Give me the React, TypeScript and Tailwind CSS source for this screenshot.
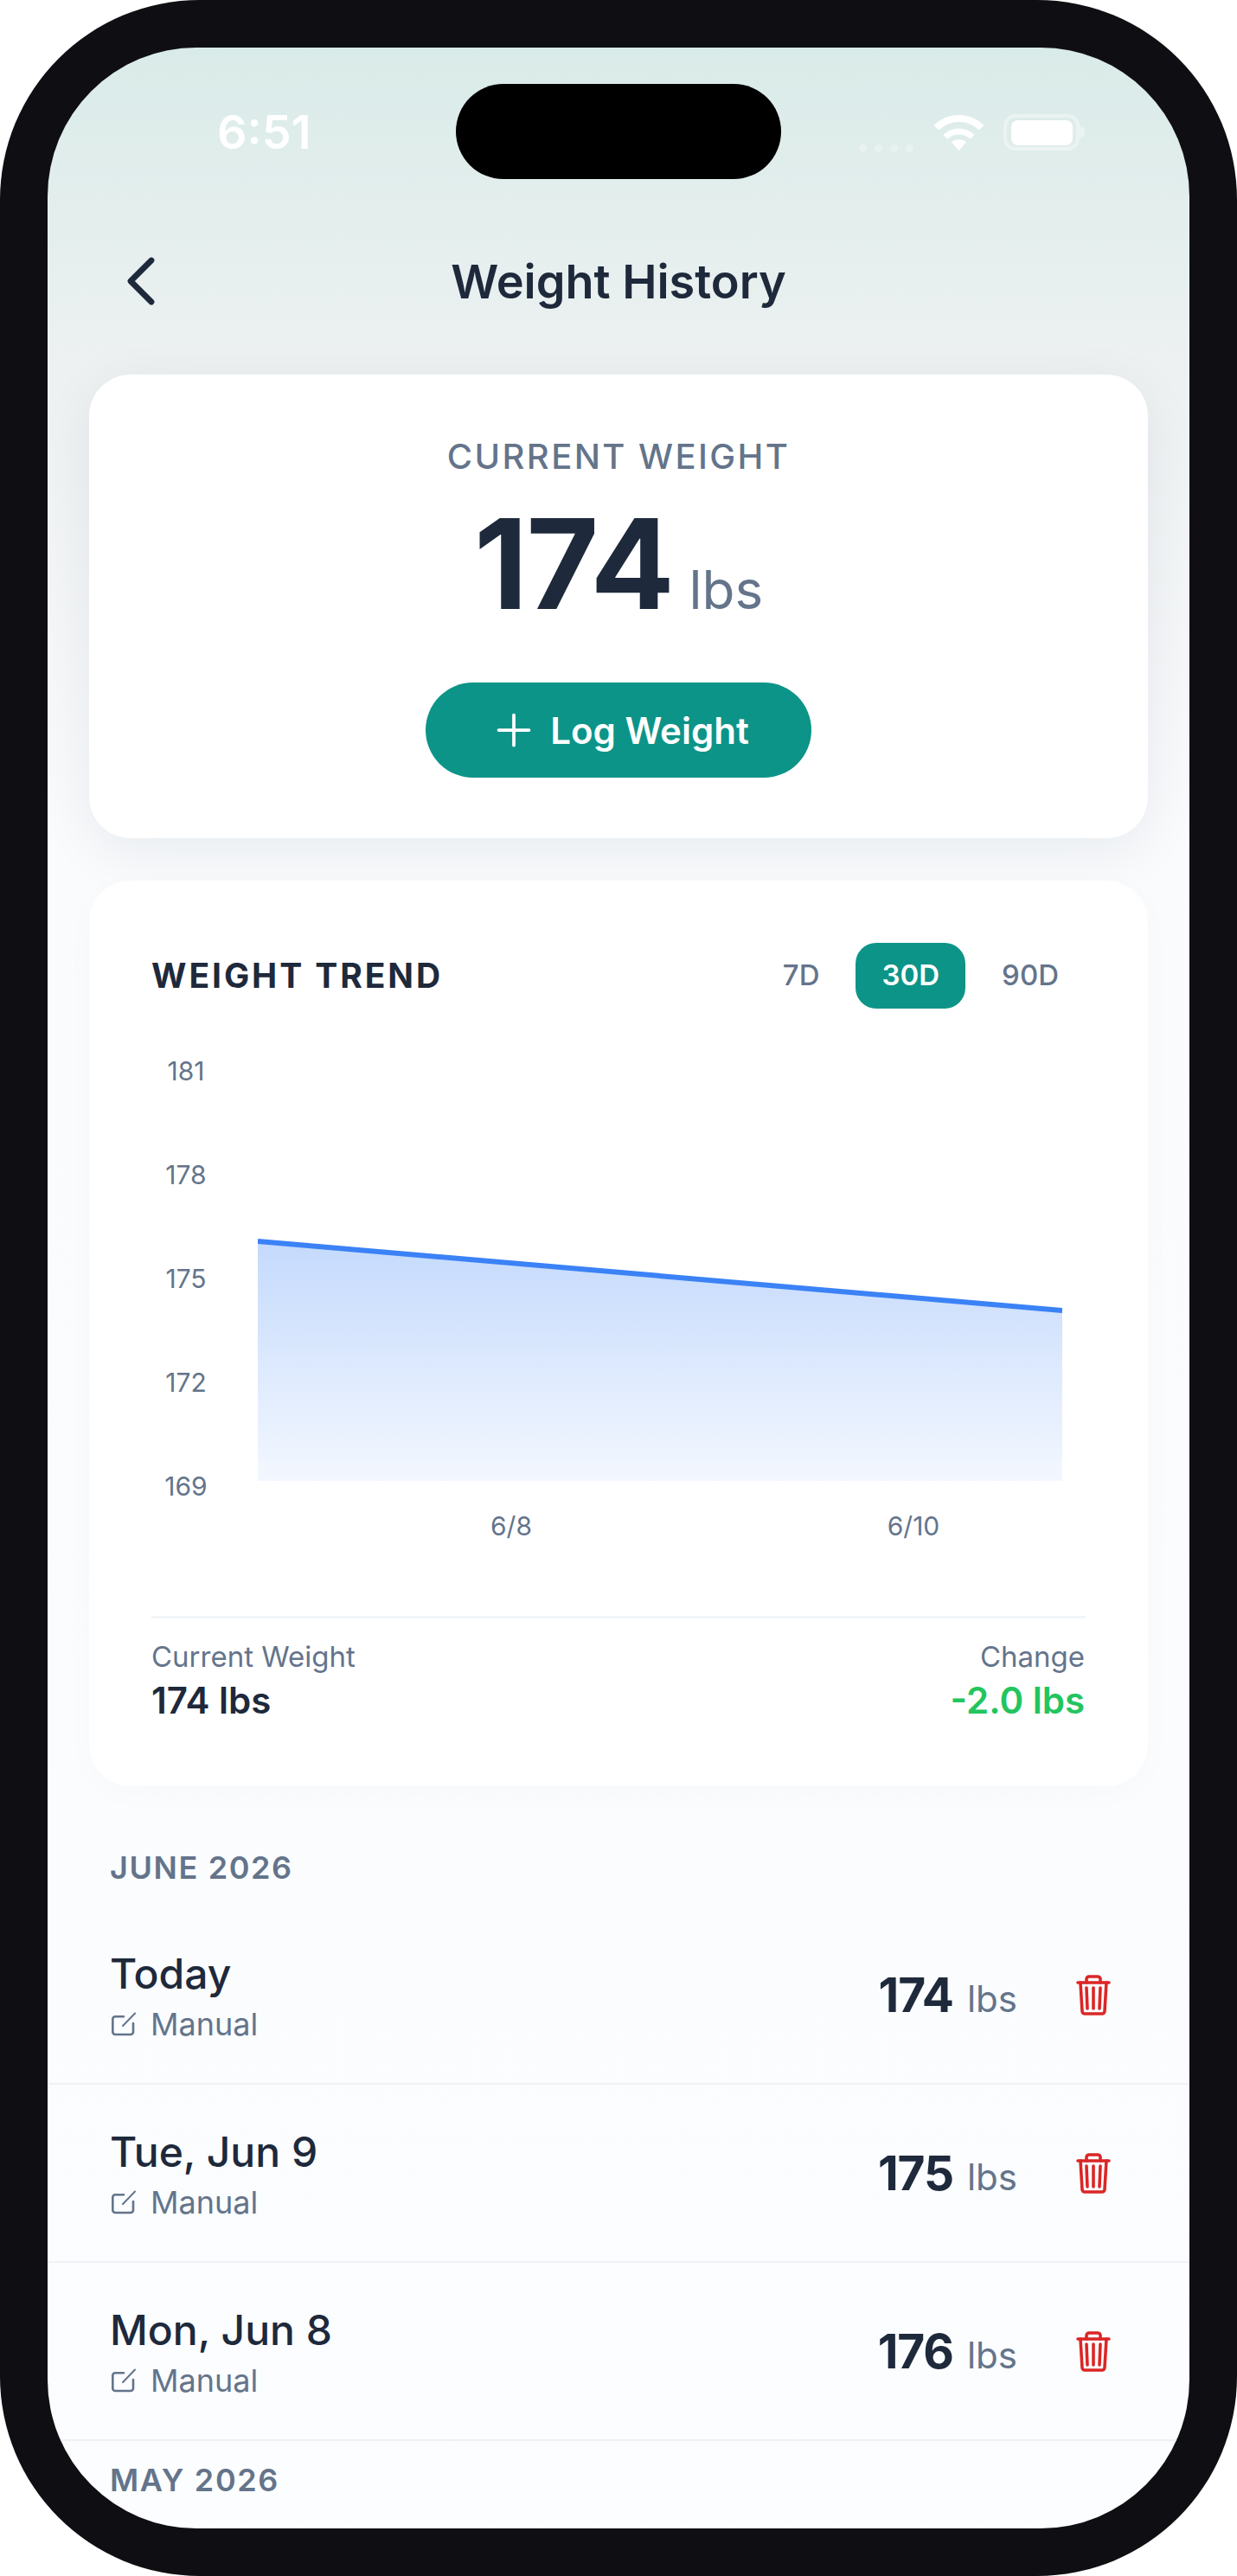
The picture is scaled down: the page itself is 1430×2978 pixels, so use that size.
import { ChevronLeft, Plus } from 'lucide-react'

const ROWS = [
  { date: 'Today', weight: 174 },
  { date: 'Tue, Jun 9', weight: 175 },
  { date: 'Mon, Jun 8', weight: 176 },
]

function StatusBar() {
  return (
    <div className="flex h-[196px] items-center justify-between pl-[196px] pr-[121px]">
      <span className="text-[54px] font-semibold leading-none text-white">6:51</span>
      <div className="flex items-center">
        <div className="mt-[36px] flex gap-[9px] opacity-30">
          <span className="h-[9px] w-[9px] rounded-full bg-white" />
          <span className="h-[9px] w-[9px] rounded-full bg-white" />
          <span className="h-[9px] w-[9px] rounded-full bg-white" />
          <span className="h-[9px] w-[9px] rounded-full bg-white" />
        </div>
        <svg className="ml-[24px]" width="57" height="41" viewBox="0 0 57 41" fill="none">
          <path d="M2.3 14.8A37 37 0 0 1 54.7 14.8" stroke="#fff" strokeWidth="8" />
          <path d="M12.9 25.4A22 22 0 0 1 44.1 25.4" stroke="#fff" strokeWidth="7" />
          <path d="M28.5 41L20 31.5A13 13 0 0 1 37 31.5Z" fill="#fff" />
        </svg>
        <div className="ml-[23px] flex h-[42px] w-[88px] items-center justify-center rounded-[14px] border-[4px] border-white/40">
          <span className="h-[29px] w-[71px] rounded-[8px] bg-white" />
        </div>
        <span className="h-[14px] w-[6px] rounded-r-full bg-white/40" />
      </div>
    </div>
  )
}

function TrendTab({ label, active }: { label: string; active?: boolean }) {
  return (
    <span
      className={`flex h-[76px] items-center rounded-[24px] text-[33px] ${
        active ? 'bg-[#0d9488] px-[30px] font-semibold text-white' : 'px-[31px] font-medium text-[#64748b]'
      }`}
    >
      {label}
    </span>
  )
}

function TrendChart() {
  return (
    <>
      <div className="mt-[54px] flex h-[516px]">
        <div className="flex w-[80px] flex-col justify-between text-center text-[30px] leading-[36px] text-[#64748b]">
          <span>181</span>
          <span>178</span>
          <span>175</span>
          <span>172</span>
          <span>169</span>
        </div>
        <svg className="ml-[43px]" width="930" height="516" viewBox="0 0 930 516">
          <defs>
            <linearGradient id="trendFill" x1="0" y1="0" x2="0" y2="1">
              <stop offset="0" stopColor="#3b82f6" stopOpacity="0.3" />
              <stop offset="1" stopColor="#3b82f6" stopOpacity="0.06" />
            </linearGradient>
          </defs>
          <path d="M0 215L930 295V492H0Z" fill="url(#trendFill)" />
          <path d="M0 215L930 295" stroke="#3b82f6" strokeWidth="6" fill="none" />
        </svg>
      </div>
      <div className="ml-[366px] mt-[10px] flex gap-[365px] text-[30px] leading-[36px] text-[#64748b]">
        <span className="w-[100px] text-center">6/8</span>
        <span className="w-[100px] text-center">6/10</span>
      </div>
    </>
  )
}

function EditIcon() {
  return (
    <svg className="ml-[2px]" width="28" height="28" viewBox="0 0 28 28" fill="none" stroke="#64748b" strokeWidth="2.6" strokeLinecap="round" strokeLinejoin="round">
      <path d="M14 5.300H4a2.700 2.700 0 0 0-2.700 2.700v15a3 3 0 0 0 3 3H22a3 3 0 0 0 3-3V13" />
      <path d="M13 16L27 1.500" strokeWidth="2" />
    </svg>
  )
}

function TrashIcon() {
  return (
    <svg width="40" height="47" viewBox="0 0 40 47" fill="none" stroke="#dc2626" strokeWidth="3.600" strokeLinecap="round" strokeLinejoin="round">
      <path d="M2 9H38" />
      <path d="M5 9L7 42a3 3 0 0 0 3 3H30a3 3 0 0 0 3-3L35 9" />
      <path d="M12 9V5a3 3 0 0 1 3-3H25a3 3 0 0 1 3 3V9" />
      <path d="M12 15L13 39" />
      <path d="M20 15V39" />
      <path d="M28 15L27 39" />
    </svg>
  )
}

function LogRow({ date, weight }: { date: string; weight: number }) {
  return (
    <div className="flex h-[206px] items-center justify-between border-b-2 border-[#eef1f5] pl-[72px] pr-[91px]">
      <div className="flex flex-col pt-[4px]">
        <span className="text-[48px] font-medium leading-[60px] text-[#1e293b]">{date}</span>
        <div className="mt-[4px] flex items-center gap-[17px] text-[36px] leading-[48px] text-[#64748b]">
          <EditIcon />
          <span>Manual</span>
        </div>
      </div>
      <div className="flex items-center gap-[68px]">
        <div className="flex items-baseline gap-[16px]">
          <span className="text-[55px] font-bold leading-none tracking-[-0.02em] text-[#1e293b]">{weight}</span>
          <span className="text-[42px] leading-none text-[#64748b]">lbs</span>
        </div>
        <TrashIcon />
      </div>
    </div>
  )
}

export default function App() {
  return (
    <div className="h-[2978px] w-[1430px] bg-white font-['Inter',sans-serif]">
      <div className="h-full w-full rounded-[231px] bg-[#0f0f13] p-[55px]">
        <div className="relative h-full w-full overflow-hidden rounded-[172px] bg-[linear-gradient(180deg,#d9ebe8_0px,#eef1f2_380px,#f9fbfd_900px,#fbfdff_100%)]">
          <div className="absolute left-[472px] top-[42px] h-[110px] w-[376px] rounded-[55px] bg-black" />
          <StatusBar />

          <div className="grid h-[148px] grid-cols-[1fr_auto_1fr] items-center px-[60px]">
            <ChevronLeft size={96} strokeWidth={1.7} color="#1e293b" />
            <h1 className="text-[54px] font-semibold text-[#1e293b]">Weight History</h1>
          </div>

          <div className="mx-[48px] mt-[34px] flex h-[536px] flex-col items-center rounded-[48px] bg-white shadow-[0_16px_64px_rgba(15,23,42,0.07)]">
            <span className="mt-[72px] text-[40px] font-medium leading-[46px] tracking-[0.06em] text-[#64748b]">CURRENT WEIGHT</span>
            <div className="mt-[31px] flex items-baseline gap-[18px]">
              <span className="text-[144px] font-bold leading-[140px] tracking-[-0.01em] text-[#1e293b]">174</span>
              <span className="text-[62px] leading-none text-[#64748b]">lbs</span>
            </div>
            <button className="mt-[67px] flex h-[110px] w-[446px] items-center justify-center gap-[12px] rounded-full bg-[#0d9488] text-[42px] font-semibold text-white">
              <Plus size={60} strokeWidth={1.5} />
              Log Weight
            </button>
          </div>

          <div className="mx-[48px] mt-[49px] h-[1047px] rounded-[48px] bg-white px-[72px] pt-[72px] shadow-[0_8px_40px_rgba(15,23,42,0.02)]">
            <div className="flex items-center justify-between">
              <span className="text-[39px] font-bold tracking-[0.075em] text-[#1e293b]">WEIGHT TREND</span>
              <div className="flex gap-[11px]">
                <TrendTab label="7D" />
                <TrendTab label="30D" active />
                <TrendTab label="90D" />
              </div>
            </div>
            <TrendChart />
            <div className="mt-[86px] flex justify-between border-t-[3px] border-[#f1f5f9] pt-[22px]">
              <div className="flex flex-col">
                <span className="text-[33px] leading-[44px] text-[#64748b]">Current Weight</span>
                <span className="mt-[4px] text-[42px] font-semibold leading-[50px] text-[#1e293b]">174 lbs</span>
              </div>
              <div className="flex flex-col items-end pr-[1px]">
                <span className="text-[33px] leading-[44px] text-[#64748b]">Change</span>
                <span className="mt-[4px] text-[42px] font-semibold leading-[50px] text-[#22c55e]">-2.0 lbs</span>
              </div>
            </div>
          </div>

          <div className="mt-[69px] pl-[72px] text-[36px] font-semibold leading-[50px] tracking-[0.045em] text-[#64748b]">JUNE 2026</div>
          <div className="mt-[20px]">
            {ROWS.map((row) => (
              <LogRow key={row.date} date={row.date} weight={row.weight} />
            ))}
          </div>
          <div className="mt-[20px] pl-[72px] text-[36px] font-semibold leading-[50px] tracking-[0.045em] text-[#64748b]">MAY 2026</div>
        </div>
      </div>
    </div>
  )
}
